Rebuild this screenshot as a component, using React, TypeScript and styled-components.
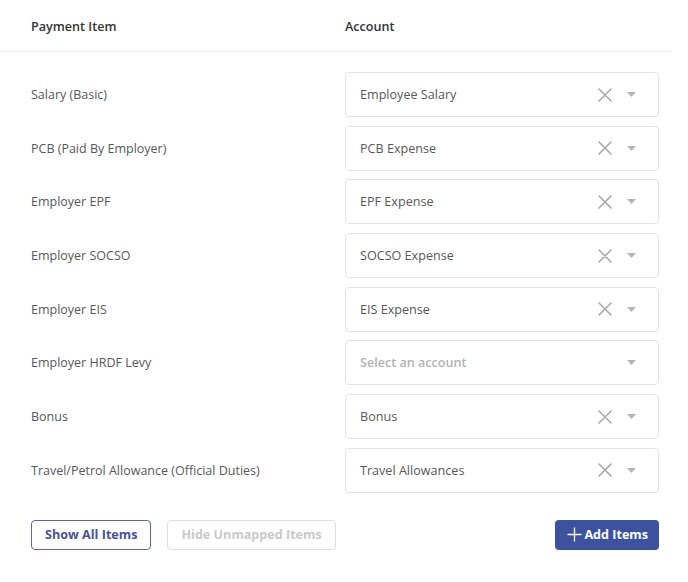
import React from 'react';
import styled, { createGlobalStyle } from 'styled-components';

const GlobalStyle = createGlobalStyle`
  body {
    margin: 0;
    background: #ffffff;
    font-family: "Open Sans", Lato, sans-serif;
  }
`;

type Mapping = { item: string; account?: string };

const mappings: Mapping[] = [
  { item: 'Salary (Basic)', account: 'Employee Salary' },
  { item: 'PCB (Paid By Employer)', account: 'PCB Expense' },
  { item: 'Employer EPF', account: 'EPF Expense' },
  { item: 'Employer SOCSO', account: 'SOCSO Expense' },
  { item: 'Employer EIS', account: 'EIS Expense' },
  { item: 'Employer HRDF Levy' },
  { item: 'Bonus', account: 'Bonus' },
  { item: 'Travel/Petrol Allowance (Official Duties)', account: 'Travel Allowances' },
];

const ClearIcon = () => (
  <svg width="14" height="14" viewBox="0 0 14 14" fill="none">
    <path d="M1 1L13 13M13 1L1 13" stroke="#a9a9a9" strokeWidth="1.6" strokeLinecap="round" />
  </svg>
);

const CaretIcon = () => (
  <svg width="9" height="5" viewBox="0 0 9 5">
    <path d="M0 0H9L4.5 5Z" fill="#b4b4b4" />
  </svg>
);

const PlusIcon = () => (
  <svg width="15" height="15" viewBox="0 0 15 15" fill="none">
    <path d="M7.5 0.5V14.5M0.5 7.5H14.5" stroke="#ffffff" strokeWidth="1.3" />
  </svg>
);

const App: React.FC = () => {
  return (
    <>
      <GlobalStyle />
      <Page>
        <Header>
          <HeadCell>Payment Item</HeadCell>
          <HeadCell>Account</HeadCell>
        </Header>
        <Body>
          {mappings.map((m) => (
            <Row key={m.item}>
              <Label>{m.item}</Label>
              <Select>
                <Value $placeholder={!m.account}>{m.account ?? 'Select an account'}</Value>
                <Indicators>
                  <IconSlot>{m.account && <ClearIcon />}</IconSlot>
                  <IconSlot>
                    <CaretIcon />
                  </IconSlot>
                </Indicators>
              </Select>
            </Row>
          ))}
        </Body>
        <Footer>
          <FilterGroup>
            <OutlineButton>Show All Items</OutlineButton>
            <OutlineButton disabled>Hide Unmapped Items</OutlineButton>
          </FilterGroup>
          <PrimaryButton>
            <PlusIcon />
            Add Items
          </PrimaryButton>
        </Footer>
      </Page>
    </>
  );
};

const Page = styled.div`
  width: 672px;
  color: #555;
`;

const Header = styled.div`
  display: grid;
  grid-template-columns: 1fr 1fr;
  height: 52px;
  align-items: center;
  padding: 0 13px 0 31px;
  border-bottom: 1px solid #ececec;
  box-sizing: border-box;
`;

const HeadCell = styled.div`
  font-size: 12.6px;
  font-weight: 600;
  color: #333;
  padding-top: 2px;
`;

const Body = styled.div`
  display: flex;
  flex-direction: column;
  gap: 8.7px;
  padding: 20px 13px 0 31px;
`;

const Row = styled.div`
  display: grid;
  grid-template-columns: 1fr 1fr;
  align-items: center;
`;

const Label = styled.div`
  font-size: 12.5px;
  color: #585858;
`;

const Select = styled.div`
  display: flex;
  align-items: center;
  height: 45px;
  box-sizing: border-box;
  border: 1px solid #e3e3e3;
  border-radius: 4px;
  padding: 0 20px 0 14px;
`;

const Value = styled.div<{ $placeholder?: boolean }>`
  flex: 1;
  font-size: 12.6px;
  color: ${(p) => (p.$placeholder ? '#b3b3b3' : '#585858')};
  font-weight: ${(p) => (p.$placeholder ? 600 : 400)};
`;

const Indicators = styled.div`
  display: flex;
  align-items: center;
  gap: 12px;
`;

const IconSlot = styled.span`
  display: flex;
  align-items: center;
  justify-content: center;
  width: 14px;
`;

const Footer = styled.div`
  display: flex;
  justify-content: space-between;
  align-items: center;
  padding: 27px 13px 0 31px;
`;

const FilterGroup = styled.div`
  display: flex;
  gap: 16px;
`;

const OutlineButton = styled.button`
  height: 30px;
  padding: 0 13px;
  border-radius: 4px;
  background: #fff;
  font-family: inherit;
  font-size: 12.6px;
  font-weight: 700;
  border: 1px solid #5d66a6;
  color: #47529a;
  &:disabled {
    border-color: #dedede;
    color: #c9c9c9;
  }
`;

const PrimaryButton = styled.button`
  display: flex;
  align-items: center;
  gap: 2px;
  height: 30px;
  padding: 0 11px 0 12px;
  border: none;
  border-radius: 4px;
  background: #3d529e;
  color: #fff;
  font-family: inherit;
  font-size: 12.6px;
  font-weight: 700;
`;

export default App;
